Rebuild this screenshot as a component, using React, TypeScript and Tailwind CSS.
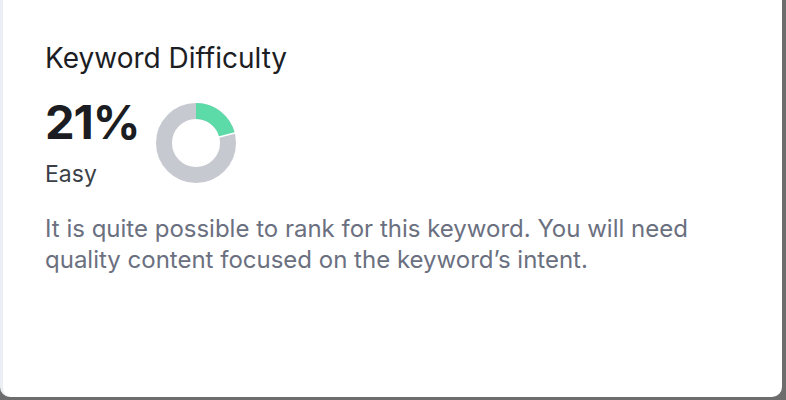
import React from "react";

function Donut({ value }: { value: number }) {
  const r = 32;
  const c = 2 * Math.PI * r;
  const green = (value / 100) * c;
  const angle = ((value / 100) * 360 - 90) * (Math.PI / 180);
  return (
    <svg width="82" height="82" viewBox="0 0 82 82" className="mt-[6px] shrink-0">
      <circle cx="41" cy="41" r={r} fill="none" stroke="#c7c9d1" strokeWidth="16" />
      <circle
        cx="41"
        cy="41"
        r={r}
        fill="none"
        stroke="#5cdba9"
        strokeWidth="16"
        strokeDasharray={`${green} ${c}`}
        transform="rotate(-90 41 41)"
      />
      <line
        x1="41"
        y1="41"
        x2={41 + 41 * Math.cos(angle)}
        y2={41 + 41 * Math.sin(angle)}
        stroke="#ffffff"
        strokeWidth="1.5"
      />
    </svg>
  );
}

export default function App() {
  return (
    <div className="flex h-[400px] w-[786px] bg-[#6d6d6d] font-['Inter',sans-serif]">
      <div className="mb-[3px] mr-[4px] flex-1 rounded-b-[10px] border-l-[3px] border-[#eceef3] bg-white pl-[42px] pt-[41px]">
        <h2 className="text-[28px] leading-[34px] text-[#1c1e24]">Keyword Difficulty</h2>
        <div className="mt-[21px] flex items-start gap-[15px]">
          <div className="flex flex-col">
            <span className="text-[47px] font-bold leading-[52px] tracking-[-1px] text-[#1b1d22]">21%</span>
            <span className="mt-[12px] text-[23px] leading-[28px] text-[#3b3f48]">Easy</span>
          </div>
          <Donut value={21} />
        </div>
        <p className="mt-[25px] w-[700px] text-[24px] leading-[31px] text-[#6b7080]">
          It is quite possible to rank for this keyword. You will need quality content focused on the keyword’s intent.
        </p>
      </div>
    </div>
  );
}
